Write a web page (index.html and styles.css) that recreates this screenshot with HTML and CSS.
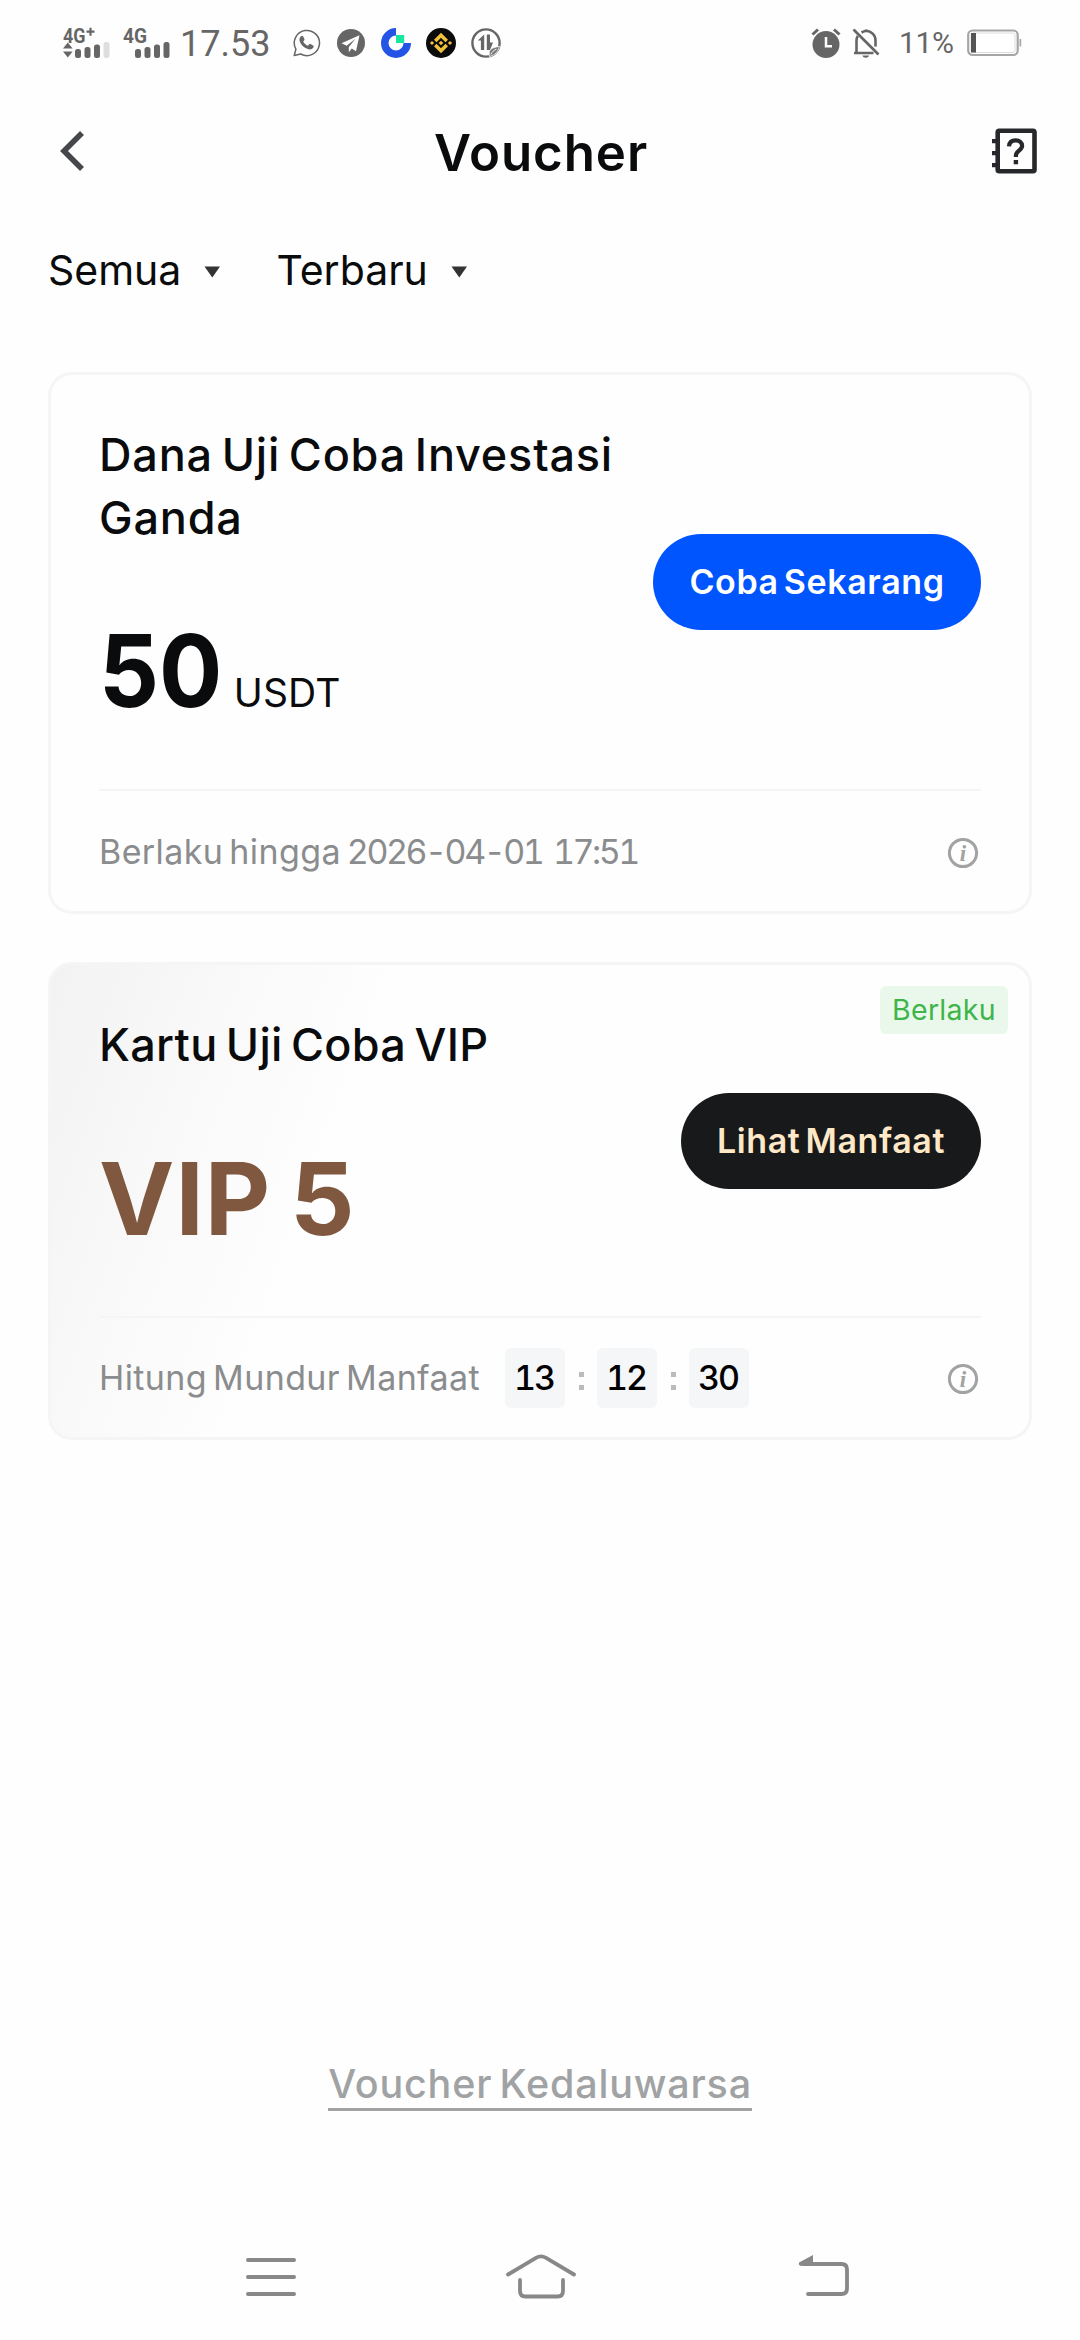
FILE: index.html
```html
<!DOCTYPE html>
<html lang="id">
<head>
<meta charset="utf-8">
<title>Voucher</title>
<link rel="stylesheet" href="styles.css">
</head>
<body>
<div class="status">
  <svg class="signal" width="108" height="44" viewBox="63 20 108 44" fill="#666">
    <g class="signal-label">
      <text x="63" y="41.5" textLength="22.5" lengthAdjust="spacingAndGlyphs">4G</text>
      <text x="123" y="41.5" textLength="24" lengthAdjust="spacingAndGlyphs">4G</text>
    </g>
    <path d="M86.5 30.7h8M90.5 26.7v8" stroke="#666" stroke-width="2.2"/>
    <path d="M63 47.5l4.8-6 4.8 6zM63 50.5l4.8 6 4.8-6z"/>
    <rect x="75" y="48" width="6" height="9" rx="2.5"/>
    <rect x="84.5" y="46" width="6" height="11" rx="2.5"/>
    <rect x="94" y="43.5" width="6" height="13.5" rx="2.5"/>
    <rect x="103.5" y="41" width="6" height="16" rx="2.5" fill="#dedede"/>
    <rect x="135" y="48" width="6" height="9" rx="2.5"/>
    <rect x="144.5" y="46" width="6" height="11" rx="2.5"/>
    <rect x="154" y="43.5" width="6" height="13.5" rx="2.5"/>
    <rect x="163.5" y="41" width="6" height="16" rx="2.5"/>
  </svg>
  <span class="clock">17.53</span>
  <div class="apps">
    <svg width="30" height="30" viewBox="0 0 30 30">
      <path d="M3.2 27.5l1.7-6.3A12.6 12.6 0 1 1 9.7 26z" fill="none" stroke="#666" stroke-width="1.5" stroke-linejoin="round"/>
      <path d="M10 8.2c.7-.8 1.7-.7 2.2.2l1.2 2.5c.3.6.1 1.100-.3 1.600l-.9 1c1.100 2.100 2.500 3.400 4.700 4.300l1.200-1.400c.4-.5.9-.6 1.400-.3l2.500 1.300c.8.400.9.900.6 1.700-.9 2.200-3.500 2.900-5.800 2C12.200 19.500 9.300 16.200 8.500 12.600 8.200 11 8.700 9.500 10 8.200z" fill="#666"/>
    </svg>
    <svg width="30" height="30" viewBox="0 0 30 30">
      <circle cx="15" cy="15" r="14" fill="#666"/>
      <path d="M23.5 7.2L5.5 15.2l5.2 2.6 8.800-7-6.700 8.200v5.200l3-3.600 4.200 2.600z" fill="#fff"/>
    </svg>
    <svg width="30" height="30" viewBox="0 0 30 30">
      <path d="M15 0A15 15 0 1 0 30 15h-7.500A7.500 7.500 0 1 1 15 7.500z" fill="#2354e6"/>
      <path d="M15 7h8.200v8H15z" fill="#17e6a1"/>
    </svg>
    <svg width="30" height="30" viewBox="0 0 30 30">
      <circle cx="15" cy="15" r="15" fill="#0b0b0b"/>
      <g fill="#f0c23c">
        <path d="M15 4.800l7 7-2.500 2.500L15 9.800l-4.500 4.500L8 11.800zM15 25.200l7-7-2.500-2.500-4.500 4.500-4.500-4.500L8 18.200z"/>
        <path d="M15 12.700l2.300 2.300-2.300 2.300-2.300-2.300zM6 12.900L8.100 15 6 17.100 3.900 15zM24 12.900l2.100 2.100-2.100 2.100-2.100-2.100z"/>
      </g>
    </svg>
    <svg width="30" height="30" viewBox="0 0 30 30">
      <circle cx="15" cy="15" r="13.600" fill="none" stroke="#666" stroke-width="2.400"/>
      <path d="M13.200 6.500v15.500h-3.300V12.500H6.800zM15.800 6.500h3.200v15.500h-3.200zM19 14.500h3L19 22z" fill="#666"/>
      <path d="M28.500 18.200c-3 .8-7.500 1.200-9.500 4-1 1.500-1 3.800-.5 6.300 5.500-1.500 8.500-4.500 10-10.300z" fill="#777" stroke="#fff" stroke-width=".8"/>
      <path d="M19.800 26.500c1-2.500 3-4.200 5.600-5.300" fill="none" stroke="#fff" stroke-width="1"/>
    </svg>
  </div>
  <div class="system">
    <svg width="30" height="30" viewBox="0 0 30 30">
      <circle cx="15" cy="16.5" r="13.5" fill="#666"/>
      <path d="M15 9v9.300h6" fill="none" stroke="#fff" stroke-width="2.500"/>
      <path d="M1.500 6.500L7 1.500M28.500 6.500L23 1.500" stroke="#666" stroke-width="3"/>
    </svg>
    <svg width="28" height="30" viewBox="0 0 28 30" fill="none" stroke="#666" stroke-width="2.600">
      <path d="M4.500 25V12.500c0-1.700.5-3.200 1.300-4.500M9.500 4.500C16 .8 23.500 5 23.500 12.500v6M2 25h19.500"/>
      <path d="M1.500 1.500l25 25"/>
      <path d="M10.500 27.500h6.500c-.5 3-6 3-6.500 0zM12 3.500C12 .5 16 .5 16 3.500z" fill="#666" stroke="none"/>
    </svg>
    <span class="percent">11%</span>
    <svg width="56" height="28" viewBox="0 0 56 28">
      <rect x="1.200" y="1.500" width="49.500" height="24.500" rx="4.500" fill="#fff" stroke="#a6a6a6" stroke-width="2.200"/>
      <rect x="4" y="4" width="44" height="19.500" rx="2" fill="none" stroke="#dcdcdc" stroke-width="1"/>
      <path d="M4 4h5v19.500H4z" fill="#555"/>
      <path d="M52.500 10h1.700v7.500h-1.700z" fill="#a6a6a6"/>
    </svg>
  </div>
</div>

<header class="header">
  <svg class="back" width="24" height="40" viewBox="0 0 24 40"><path d="M22 2L4 20l18 18" fill="none" stroke="#45474b" stroke-width="5.600"/></svg>
  <h1>Voucher</h1>
  <svg class="help" width="46" height="46" viewBox="0 0 46 46">
    <rect x="6.700" y="2.700" width="36.800" height="40.600" rx="1.500" fill="none" stroke="#26282b" stroke-width="4.600"/>
    <path d="M1 11h5v4.200H1zM1 23h5v4.200H1zM1 35h5v4.200H1z" fill="#26282b"/>
    <path d="M18 18.300c.3-4.200 3-6 6.500-6 3.900 0 6.600 2.200 6.600 5.500 0 4.900-6.200 4.800-6.200 9.700v1.500" fill="none" stroke="#26282b" stroke-width="4.200"/>
    <path d="M22.700 32h4.400v4.300h-4.400z" fill="#26282b"/>
  </svg>
</header>

<nav class="filters">
  <span class="filter">Semua <svg width="17" height="12" viewBox="0 0 17 12"><path d="M.5.5h15.500L8.300 11.500z" fill="#333"/></svg></span>
  <span class="filter">Terbaru <svg width="17" height="12" viewBox="0 0 17 12"><path d="M.5.5h15.500L8.300 11.500z" fill="#333"/></svg></span>
</nav>

<main class="main">
  <section class="card">
    <div class="body">
      <div class="info">
        <h2>Dana Uji Coba Investasi Ganda</h2>
        <p class="amount"><span class="value">50</span><small>USDT</small></p>
      </div>
      <button class="btn btn-try">Coba Sekarang</button>
    </div>
    <div class="foot">
      <span class="note">Berlaku hingga <span class="date">2026-04-01 17:51</span></span>
      <svg class="tip" width="32" height="32" viewBox="0 0 32 32"><circle cx="16" cy="16" r="13.600" fill="none" stroke="#a0a2a3" stroke-width="3"/><text x="16" y="23.500" text-anchor="middle">i</text></svg>
    </div>
  </section>

  <section class="card card-vip">
    <span class="badge">Berlaku</span>
    <div class="body">
      <div class="info">
        <h2>Kartu Uji Coba VIP</h2>
        <p class="amount level">VIP 5</p>
      </div>
      <button class="btn btn-benefit">Lihat Manfaat</button>
    </div>
    <div class="foot">
      <span class="note">Hitung Mundur Manfaat</span>
      <div class="timer"><b>13</b><i></i><b>12</b><i></i><b>30</b></div>
      <svg class="tip" width="32" height="32" viewBox="0 0 32 32"><circle cx="16" cy="16" r="13.600" fill="none" stroke="#a0a2a3" stroke-width="3"/><text x="16" y="23.500" text-anchor="middle">i</text></svg>
    </div>
  </section>

  <a class="expired">Voucher Kedaluwarsa</a>
</main>

<footer class="navbar">
  <svg width="50" height="60" viewBox="0 0 50 60" stroke="#888" stroke-width="4" stroke-linecap="round"><path d="M2 13h46M2 30h46M2 47h46"/></svg>
  <svg class="home" width="72" height="60" viewBox="0 0 72 60" fill="none" stroke="#888" stroke-width="3.800" stroke-linecap="round"><path d="M3 27.500L31 10.800q5-3 10 0L69 27.500M15 33v11q0 5.500 5.500 5.500h32q5.500 0 5.500-5.500V33"/></svg>
  <svg width="52" height="60" viewBox="0 0 52 60"><path d="M5 17h38.500q5.500 0 5.500 5.500v19q0 5.500-5.500 5.500H10" fill="none" stroke="#888" stroke-width="3.800" stroke-linecap="round"/><path d="M1 15.500L15 8v10.800H2q-2-1.500-1-3.300z" fill="#888"/></svg>
</footer>
</body>
</html>
```
FILE: styles.css
```css
* { box-sizing: border-box; margin: 0; padding: 0; }

body {
  display: flex;
  flex-direction: column;
  width: 1080px;
  height: 2340px;
  background: #fefefe;
  color: #0a0b0c;
  font-family: Inter, "Liberation Sans", sans-serif;
}

svg { display: block; flex: none; }

/* System status bar */
.status {
  display: flex;
  align-items: center;
  height: 85px;
  padding: 0 57px 0 63px;
  color: #666;
  font-family: Roboto, sans-serif;
}
.signal-label { font: 700 20px Roboto, sans-serif; }
.clock { width: 110px; margin-left: 9px; font-size: 36px; line-height: 84px; padding-top: 2px; }
.apps { display: flex; gap: 15px; margin-left: 1px; }
.system { display: flex; align-items: center; margin-left: auto; }
.system svg:nth-child(2) { margin-left: 11px; }
.percent { width: 68px; margin-left: 19px; font-size: 30px; letter-spacing: -0.3px; }

/* Page header */
.header {
  display: grid;
  grid-template-columns: 1fr auto 1fr;
  align-items: center;
  height: 135px;
  padding: 0 43px 0 60px;
}
.header h1 { font-size: 51px; font-weight: 600; letter-spacing: 0.9px; line-height: 60px; padding-right: 15px; }
.back { margin-bottom: 4px; }
.help { justify-self: end; margin-bottom: 3px; }

.filters { display: flex; gap: 55px; height: 100px; padding-left: 48px; }
.filter { display: flex; align-items: center; gap: 23px; font-size: 41px; line-height: 100px; }
.filter svg { margin-top: 4px; }

.main {
  display: flex;
  flex: 1;
  flex-direction: column;
  gap: 48px;
  padding: 52px 48px 103px;
}

/* Voucher cards */
.card {
  position: relative;
  padding: 0 48px;
  border: 3px solid #f5f5f5;
  border-radius: 24px;
}
.card-vip { background: linear-gradient(110deg, #f2f2f2 0, #f8f8f8 150px, #fefefe 330px) border-box; }

.body { display: flex; align-items: center; justify-content: space-between; border-bottom: 2px solid #f5f5f5; }
.info { width: 540px; padding: 48px 0 69px; }
.card-vip .info { padding-bottom: 68px; }
.info h2 { font-size: 45px; font-weight: 500; letter-spacing: 0.8px; line-height: 63px; word-spacing: -4px; }
.card-vip h2 { letter-spacing: 0.3px; }
.amount { height: 100px; margin-top: 71px; font-size: 101px; font-weight: 700; line-height: 100px; white-space: nowrap; }
.value { display: inline-block; transform: scaleX(0.93); transform-origin: left; }
.amount small { margin-left: 2px; font-size: 39px; font-weight: 400; letter-spacing: 0.2px; line-height: 1; }
.level { margin-top: 72px; color: #80583f; letter-spacing: 1px; word-spacing: -6px; }

.btn {
  height: 96px;
  border: 0;
  border-radius: 48px;
  font: 600 34px/96px Inter, sans-serif;
  letter-spacing: 0.6px;
  text-align: center;
  white-space: nowrap;
  word-spacing: -4px;
}
.btn-try { width: 328px; background: #0055ff; color: #fff; }
.btn-benefit { width: 300px; background: #17191a; color: #ffe8c7; }

.foot { display: flex; align-items: center; height: 120px; }
.card-vip .foot { height: 119px; }
.note { color: #8a8c8e; font-size: 34px; letter-spacing: 0.4px; white-space: nowrap; word-spacing: -4px; }
.date { font-variant-numeric: tabular-nums; letter-spacing: -2.5px; word-spacing: 4px; }
.tip { margin: 3px 2px 0 auto; }
.tip text { fill: #a0a2a3; font: italic 700 23px "Liberation Serif", serif; }

.badge {
  position: absolute;
  top: 21px;
  right: 21px;
  width: 128px;
  height: 48px;
  border-radius: 6px;
  background: #eaf8ec;
  color: #3eb549;
  font-size: 28.5px;
  letter-spacing: 0.3px;
  line-height: 48px;
  text-align: center;
}

.timer { display: flex; align-items: center; margin-left: 25px; }
.timer b {
  width: 60px;
  height: 60px;
  border-radius: 6px;
  background: #f4f6f8;
  color: #000;
  font-size: 34px;
  font-variant-numeric: tabular-nums;
  font-weight: 500;
  letter-spacing: -2px;
  line-height: 60px;
  text-indent: -2px;
  text-align: center;
}
.timer i { width: 5px; height: 18px; margin: 6px 13.5px 0; border: solid #bbb; border-width: 5px 0; }

.expired {
  align-self: center;
  margin-top: auto;
  border-bottom: 3px solid #a0a2a4;
  padding-bottom: 1px;
  color: #a0a2a4;
  font-size: 39.5px;
  font-weight: 500;
  letter-spacing: 0.8px;
  line-height: 46px;
  word-spacing: -4px;
}

/* System navigation */
.navbar { display: flex; align-items: center; height: 126px; padding-left: 246px; }
.home { margin: 0 221px 0 209px; }
```
